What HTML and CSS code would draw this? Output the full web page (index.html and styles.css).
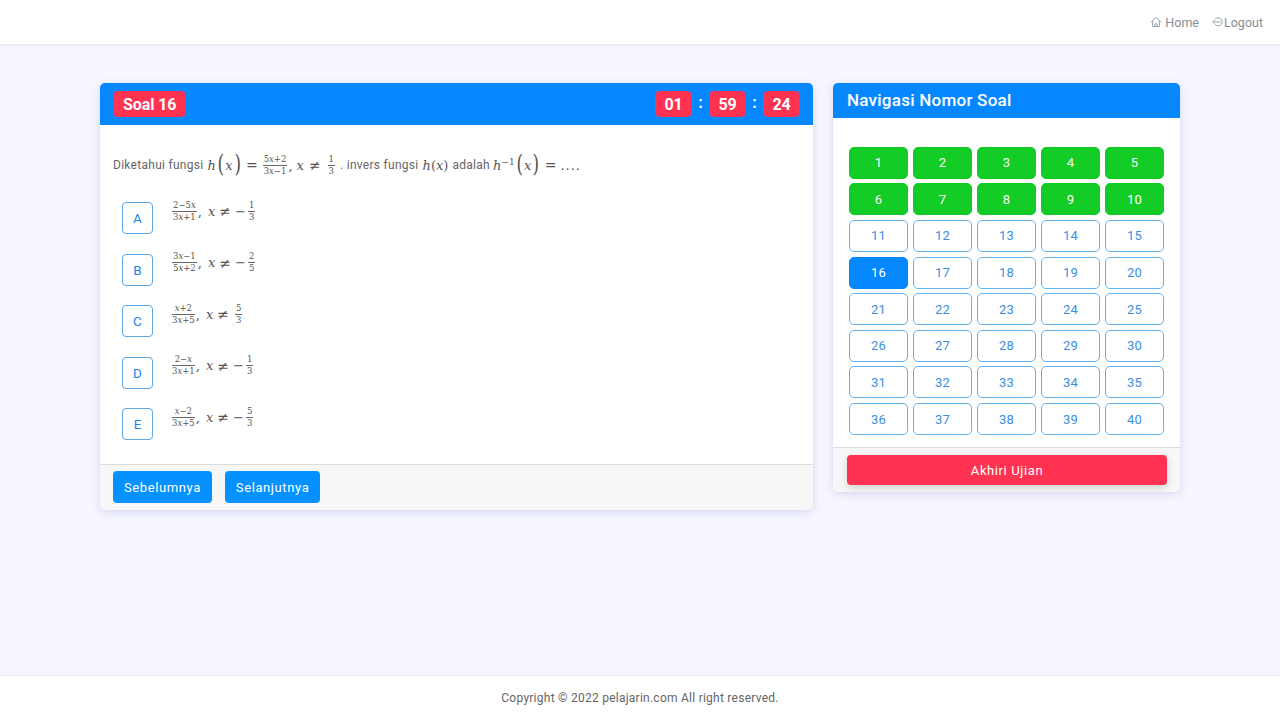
FILE: index.html
```html
<!DOCTYPE html>
<html lang="en">
<head>
  <meta charset="UTF-8">
  <meta name="viewport" content="width=device-width, initial-scale=1.0">
  <title>Soal 16</title>
  <link rel="stylesheet" href="styles.css">
</head>
<body>

  <nav class="navbar">
    <a class="nav-link" href="#">
      <svg class="nav-icon" viewBox="0 0 16 16"><path d="M1.500 8 8 2l6.500 6M3.500 6.500V14h9V6.500M6.500 14v-3.500h3V14"/></svg>
      Home
    </a>
    <a class="nav-link nav-logout" href="#">
      <svg class="nav-icon" viewBox="0 0 16 16"><path d="M4 4.500A5.300 5.300 0 1 1 4 11M11 7.800H1M3.500 5.300 1 7.800l2.500 2.500"/></svg>
      Logout
    </a>
  </nav>

  <main class="container">
    <section class="card">
      <header class="card-head card-head-soal">
        <span class="badge">Soal 16</span>
        <div class="timer">
          <span class="badge badge-time">01</span>
          <span class="colon">:</span>
          <span class="badge badge-time">59</span>
          <span class="colon">:</span>
          <span class="badge badge-time">24</span>
        </div>
      </header>

      <div class="soal-body">
        <p class="question">
          Diketahui fungsi
          <span class="math"><i>h</i><span class="paren">(</span><i>x</i><span class="paren">)</span><span class="op">=</span><span class="frac"><span>5<i>x</i>+2</span><span>3<i>x</i>−1</span></span>,<i class="ml-tight">x</i><span class="op op-wide">≠</span><span class="frac frac-small"><span>1</span><span>3</span></span></span>
          . invers fungsi
          <span class="math"><i>h</i>(<i>x</i>)</span>
          adalah
          <span class="math math-tail"><i>h</i><sup>−1</sup><span class="paren">(</span><i>x</i><span class="paren">)</span><span class="op">=</span><span class="dots">....</span></span>
        </p>

        <div class="option">
          <span class="option-key">A</span>
          <span class="math"><span class="frac"><span>2−5<i>x</i></span><span>3<i>x</i>+1</span></span>,<i class="ml">x</i><span class="op">≠</span>−<span class="frac frac-small"><span>1</span><span>3</span></span></span>
        </div>
        <div class="option">
          <span class="option-key">B</span>
          <span class="math"><span class="frac"><span>3<i>x</i>−1</span><span>5<i>x</i>+2</span></span>,<i class="ml">x</i><span class="op">≠</span>−<span class="frac frac-small"><span>2</span><span>5</span></span></span>
        </div>
        <div class="option">
          <span class="option-key">C</span>
          <span class="math"><span class="frac"><span><i>x</i>+2</span><span>3<i>x</i>+5</span></span>,<i class="ml">x</i><span class="op">≠</span><span class="frac frac-small"><span>5</span><span>3</span></span></span>
        </div>
        <div class="option">
          <span class="option-key">D</span>
          <span class="math"><span class="frac"><span>2−<i>x</i></span><span>3<i>x</i>+1</span></span>,<i class="ml">x</i><span class="op">≠</span>−<span class="frac frac-small"><span>1</span><span>3</span></span></span>
        </div>
        <div class="option">
          <span class="option-key">E</span>
          <span class="math"><span class="frac"><span><i>x</i>−2</span><span>3<i>x</i>+5</span></span>,<i class="ml">x</i><span class="op">≠</span>−<span class="frac frac-small"><span>5</span><span>3</span></span></span>
        </div>
      </div>

      <footer class="card-foot">
        <button class="btn">Sebelumnya</button>
        <button class="btn">Selanjutnya</button>
      </footer>
    </section>

    <section class="card">
      <header class="card-head card-head-nav">Navigasi Nomor Soal</header>
      <div class="nomor-grid">
        <a class="nomor done">1</a>
        <a class="nomor done">2</a>
        <a class="nomor done">3</a>
        <a class="nomor done">4</a>
        <a class="nomor done">5</a>
        <a class="nomor done">6</a>
        <a class="nomor done">7</a>
        <a class="nomor done">8</a>
        <a class="nomor done">9</a>
        <a class="nomor done">10</a>
        <a class="nomor">11</a>
        <a class="nomor">12</a>
        <a class="nomor">13</a>
        <a class="nomor">14</a>
        <a class="nomor">15</a>
        <a class="nomor current">16</a>
        <a class="nomor">17</a>
        <a class="nomor">18</a>
        <a class="nomor">19</a>
        <a class="nomor">20</a>
        <a class="nomor">21</a>
        <a class="nomor">22</a>
        <a class="nomor">23</a>
        <a class="nomor">24</a>
        <a class="nomor">25</a>
        <a class="nomor">26</a>
        <a class="nomor">27</a>
        <a class="nomor">28</a>
        <a class="nomor">29</a>
        <a class="nomor">30</a>
        <a class="nomor">31</a>
        <a class="nomor">32</a>
        <a class="nomor">33</a>
        <a class="nomor">34</a>
        <a class="nomor">35</a>
        <a class="nomor">36</a>
        <a class="nomor">37</a>
        <a class="nomor">38</a>
        <a class="nomor">39</a>
        <a class="nomor">40</a>
      </div>
      <footer class="card-foot card-foot-nav">
        <button class="btn-end">Akhiri Ujian</button>
      </footer>
    </section>
  </main>

  <footer class="page-foot">Copyright © 2022 pelajarin.com All right reserved.</footer>

</body>
</html>
```

FILE: styles.css
```css
* {
  box-sizing: border-box;
}

body {
  font-family: Roboto, "Liberation Sans", sans-serif;
  margin: 0;
  height: 720px;
  display: flex;
  flex-direction: column;
  background-color: #f6f6ff;
  color: #666;
  overflow: hidden;
}

/* top bar */
.navbar {
  height: 44px;
  flex: none;
  display: flex;
  justify-content: flex-end;
  align-items: center;
  gap: 13px;
  padding: 1px 17px 0 0;
  background-color: #fff;
  box-shadow: 0 1px 3px rgba(90, 100, 200, 0.14);
}

.nav-link {
  display: flex;
  align-items: center;
  gap: 3px;
  font-size: 12.500px;
  color: #868e96;
  text-decoration: none;
}

.nav-logout {
  gap: 0;
}

.nav-icon {
  width: 12px;
  height: 12px;
  margin-top: -2px;
  fill: none;
  stroke: #868e96;
  stroke-width: 1.1;
}

/* main layout */
.container {
  flex: 1;
  width: 1080px;
  margin: 0 auto;
  padding-top: 39px;
  display: grid;
  grid-template-columns: 713px 347px;
  gap: 20px;
  align-items: start;
}

.card {
  background-color: #fff;
  border-radius: 5px;
  box-shadow: 0 2px 8px rgba(70, 80, 180, 0.18);
  overflow: hidden;
}

.card-head {
  display: flex;
  align-items: center;
  justify-content: space-between;
  background-color: #0588ff;
  color: #fff;
}

.card-head-soal {
  height: 42px;
  padding: 0 13px;
}

.card-head-nav {
  height: 34.600px;
  padding: 0 14px;
  font-size: 17px;
  font-weight: 500;
  letter-spacing: 0.25px;
}

.badge {
  height: 26px;
  flex: none;
  display: inline-flex;
  align-items: center;
  padding: 0 10px;
  border-radius: 5px;
  background-color: #ff3251;
  color: #fff;
  font-size: 16px;
  font-weight: 700;
  letter-spacing: -0.1px;
}

.badge-time {
  width: 37px;
  padding: 0;
  justify-content: center;
}

.timer {
  display: flex;
  align-items: center;
}

.colon {
  width: 17px;
  margin-top: -4px;
  text-align: center;
  font-size: 16px;
  font-weight: 700;
}

/* question */
.soal-body {
  height: 339px;
  padding: 28px 13px 0;
}

.question {
  height: 24px;
  margin: 0 0 25px;
  display: flex;
  align-items: center;
  gap: 4px;
  font-size: 12px;
  letter-spacing: 0.28px;
}

.math {
  display: inline-flex;
  align-items: center;
  font-family: "DejaVu Serif", serif;
  font-size: 13px;
  letter-spacing: 0;
  color: #555;
}

.math sup {
  font-size: 9px;
  line-height: 1;
  margin: -6px 0 0 0;
}

.paren {
  font-size: 24px;
  font-weight: 400;
  line-height: 1;
  margin: -3px 0 0;
  transform: scaleX(0.7);
}

.op {
  margin: 0 4px;
  font-size: 14px;
}

.op-wide {
  margin: 0 5px;
}

.ml {
  margin-left: 6px;
}

.ml-tight {
  margin-left: 4px;
}

.math-tail {
  margin-left: -1px;
}

.dots {
  letter-spacing: 1px;
}

.frac {
  display: inline-flex;
  flex-direction: column;
  align-items: stretch;
  margin: 0 1px;
  text-align: center;
  font-size: 8.500px;
  line-height: 11px;
}

.frac span:first-child {
  border-bottom: 1px solid #666;
  padding: 0 1px;
}

.frac-small {
  margin: 0 1px 0 2px;
}

.option {
  height: 32px;
  margin-bottom: 19.500px;
  padding-left: 9px;
  display: flex;
  gap: 18px;
}

.option .math {
  margin-top: -14px;
}

.option-key {
  width: 31px;
  height: 32px;
  flex: none;
  display: flex;
  align-items: center;
  justify-content: center;
  border: 1px solid #5aa9e6;
  border-radius: 4px;
  color: #1c86e8;
  font-size: 13.500px;
}

/* footers of cards */
.card-foot {
  height: 46px;
  padding: 6px 13px 0;
  display: flex;
  gap: 13px;
  background-color: #f7f7f7;
  border-top: 1px solid #dcdcdc;
}

.btn {
  height: 32px;
  padding: 0 11px;
  border: none;
  border-radius: 4px;
  background-color: #0591ff;
  color: #fff;
  font-family: inherit;
  font-size: 13px;
  letter-spacing: 0.6px;
}

/* number grid */
.nomor-grid {
  padding: 29px 16px 12px;
  display: grid;
  grid-template-columns: repeat(5, 59px);
  grid-auto-rows: 32px;
  column-gap: 5px;
  row-gap: 4.650px;
}

.nomor {
  display: flex;
  align-items: center;
  justify-content: center;
  border: 1px solid #63b3ed;
  border-radius: 5px;
  color: #3d8fe0;
  font-size: 13px;
  letter-spacing: 0.3px;
}

.nomor.done {
  background-color: #14cc26;
  border-color: #14cc26;
  color: #fff;
}

.nomor.current {
  background-color: #0588ff;
  border-color: #0588ff;
  color: #fff;
}

.card-foot-nav {
  height: 44.750px;
  padding: 7px 13px 0 14px;
}

.btn-end {
  width: 100%;
  height: 30px;
  border: none;
  border-radius: 4px;
  background-color: #ff3251;
  color: #fff;
  font-family: inherit;
  font-size: 13px;
  letter-spacing: 0.6px;
  box-shadow: 0 3px 8px rgba(0, 0, 0, 0.15);
}

/* page footer */
.page-foot {
  height: 45px;
  flex: none;
  display: flex;
  align-items: center;
  justify-content: center;
  background-color: #fff;
  border-top: 1px solid #e6e8f2;
  font-size: 12px;
  letter-spacing: 0.25px;
  color: #666;
}
```
